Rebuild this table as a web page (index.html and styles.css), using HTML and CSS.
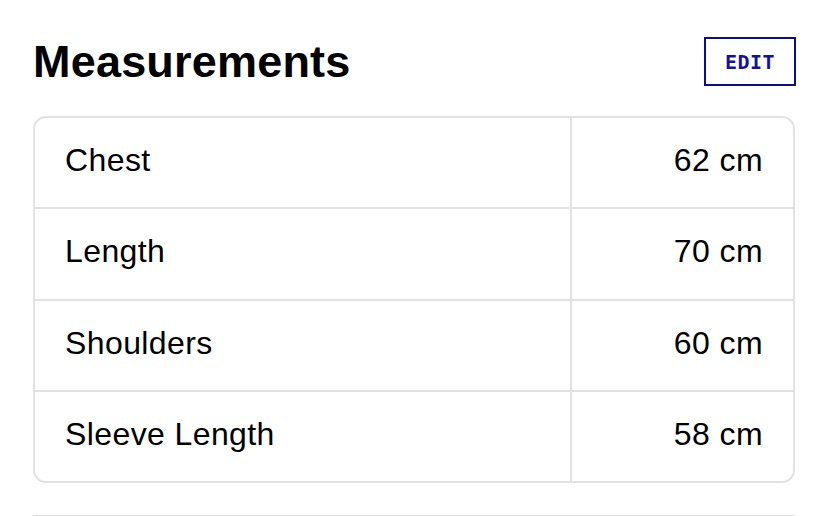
FILE: index.html
```html
<!DOCTYPE html>
<html lang="en">
<head>
<meta charset="utf-8">
<link rel="stylesheet" href="styles.css">
</head>
<body>
<main class="page">
  <header class="header">
    <h1 class="title">Measurements</h1>
    <button class="edit">EDIT</button>
  </header>
  <section class="card">
    <div class="row"><div class="label">Chest</div><div class="value">62 cm</div></div>
    <div class="row"><div class="label">Length</div><div class="value">70 cm</div></div>
    <div class="row"><div class="label">Shoulders</div><div class="value">60 cm</div></div>
    <div class="row"><div class="label">Sleeve Length</div><div class="value">58 cm</div></div>
  </section>
  <hr class="divider">
</main>
</body>
</html>
```
FILE: styles.css
```css
html, body {
  margin: 0;
  padding: 0;
  background: #ffffff;
}
.page {
  padding: 37px 33px 0 33px;
  font-family: "Liberation Sans", Arial, sans-serif;
  color: #000;
}
.header {
  display: flex;
  justify-content: space-between;
  align-items: center;
  height: 49px;
}
.title {
  margin: 0;
  font-size: 45px;
  line-height: 1;
  font-weight: 700;
  letter-spacing: 0.2px;
}
.edit {
  box-sizing: border-box;
  width: 92px;
  height: 49px;
  margin-right: -1px;
  border: 2px solid #0c0c92;
  background: #fff;
  color: #12129c;
  font-family: "DejaVu Sans Mono", monospace;
  font-weight: 700;
  font-size: 20px;
  letter-spacing: 0.5px;
  padding: 0;
  display: flex;
  align-items: center;
  justify-content: center;
}
.card {
  margin-top: 30px;
  border: 2px solid #e2e2e2;
  border-radius: 13px;
  overflow: hidden;
}
.row {
  display: grid;
  grid-template-columns: 535px 1fr;
  height: 89.3px;
  border-bottom: 2px solid #e2e2e2;
}
.row:last-child {
  border-bottom: none;
}
.label, .value {
  display: flex;
  align-items: center;
  font-size: 32px;
  padding: 0 30px;
  padding-bottom: 4px;
  letter-spacing: 0.4px;
}
.value {
  justify-content: flex-end;
  border-left: 2px solid #e2e2e2;
}
.divider {
  margin: 32px 0 0 0;
  border: none;
  height: 2px;
  background: #e2e2e2;
}
```
